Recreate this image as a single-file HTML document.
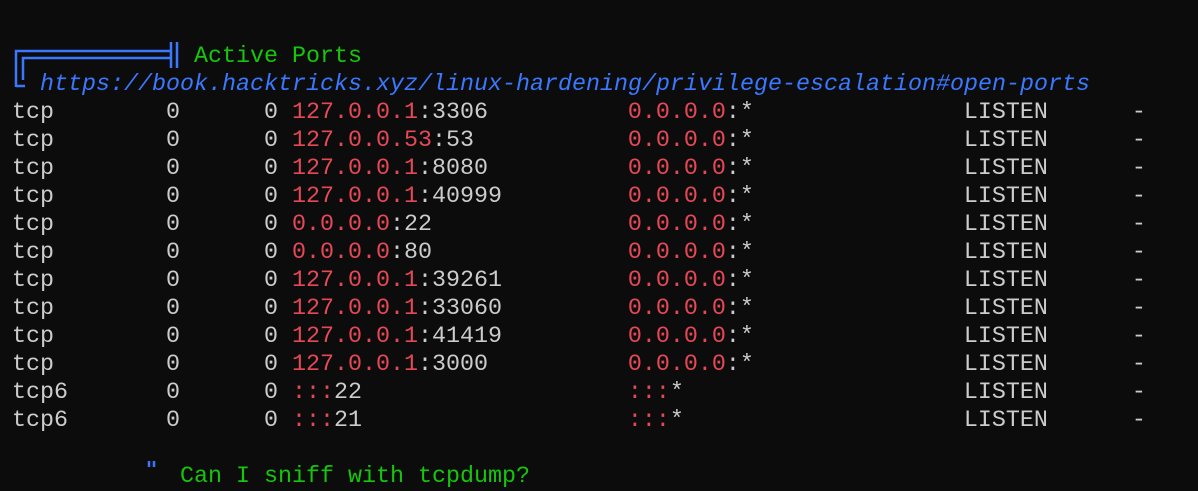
<!DOCTYPE html>
<html><head><style>
html,body{margin:0;padding:0;background:#0c0c0c;width:1198px;height:467px;overflow:hidden}
pre{position:absolute;left:12px;top:43px;margin:0;font-family:"Liberation Mono","DejaVu Sans Mono",monospace;font-size:23.33px;line-height:28px;color:#cccccc;white-space:pre}
.r{color:#e74856}.g{color:#16c60c}.b{color:#3b78ff}.i{font-style:italic}
.c1{display:inline-block;width:11ch}.c2{display:inline-block;width:7ch}.c3{display:inline-block;width:2ch}.c4{display:inline-block;width:24ch}.c5{display:inline-block;width:24ch}.c6{display:inline-block;width:12ch}
svg{position:absolute;left:0;top:0}
</style></head><body>
<svg width="1198" height="467" fill="none" stroke="#3b78ff" stroke-width="2.5">
<path d="M16 87 V51 H171"/>
<path d="M23 80 V58 H171"/>
<path d="M16 86 H25"/>
<path d="M171 42 V68 M177 42 V68"/>
<path d="M149 461 V470 M154 461 V470"/>
</svg>
<pre>             <span class="g">Active Ports</span>
  <span class="b i">https://book.hacktricks.xyz/linux-hardening/privilege-escalation#open-ports</span>
<span class="c1">tcp</span><span class="c2">0</span><span class="c3">0</span><span class="c4"><span class="r">127.0.0.1</span>:3306</span><span class="c5"><span class="r">0.0.0.0</span>:*</span><span class="c6">LISTEN</span>-
<span class="c1">tcp</span><span class="c2">0</span><span class="c3">0</span><span class="c4"><span class="r">127.0.0.53</span>:53</span><span class="c5"><span class="r">0.0.0.0</span>:*</span><span class="c6">LISTEN</span>-
<span class="c1">tcp</span><span class="c2">0</span><span class="c3">0</span><span class="c4"><span class="r">127.0.0.1</span>:8080</span><span class="c5"><span class="r">0.0.0.0</span>:*</span><span class="c6">LISTEN</span>-
<span class="c1">tcp</span><span class="c2">0</span><span class="c3">0</span><span class="c4"><span class="r">127.0.0.1</span>:40999</span><span class="c5"><span class="r">0.0.0.0</span>:*</span><span class="c6">LISTEN</span>-
<span class="c1">tcp</span><span class="c2">0</span><span class="c3">0</span><span class="c4"><span class="r">0.0.0.0</span>:22</span><span class="c5"><span class="r">0.0.0.0</span>:*</span><span class="c6">LISTEN</span>-
<span class="c1">tcp</span><span class="c2">0</span><span class="c3">0</span><span class="c4"><span class="r">0.0.0.0</span>:80</span><span class="c5"><span class="r">0.0.0.0</span>:*</span><span class="c6">LISTEN</span>-
<span class="c1">tcp</span><span class="c2">0</span><span class="c3">0</span><span class="c4"><span class="r">127.0.0.1</span>:39261</span><span class="c5"><span class="r">0.0.0.0</span>:*</span><span class="c6">LISTEN</span>-
<span class="c1">tcp</span><span class="c2">0</span><span class="c3">0</span><span class="c4"><span class="r">127.0.0.1</span>:33060</span><span class="c5"><span class="r">0.0.0.0</span>:*</span><span class="c6">LISTEN</span>-
<span class="c1">tcp</span><span class="c2">0</span><span class="c3">0</span><span class="c4"><span class="r">127.0.0.1</span>:41419</span><span class="c5"><span class="r">0.0.0.0</span>:*</span><span class="c6">LISTEN</span>-
<span class="c1">tcp</span><span class="c2">0</span><span class="c3">0</span><span class="c4"><span class="r">127.0.0.1</span>:3000</span><span class="c5"><span class="r">0.0.0.0</span>:*</span><span class="c6">LISTEN</span>-
<span class="c1">tcp6</span><span class="c2">0</span><span class="c3">0</span><span class="c4"><span class="r">:::</span>22</span><span class="c5"><span class="r">:::</span>*</span><span class="c6">LISTEN</span>-
<span class="c1">tcp6</span><span class="c2">0</span><span class="c3">0</span><span class="c4"><span class="r">:::</span>21</span><span class="c5"><span class="r">:::</span>*</span><span class="c6">LISTEN</span>-

            <span class="g">Can I sniff with tcpdump?</span></pre>
</body></html>
